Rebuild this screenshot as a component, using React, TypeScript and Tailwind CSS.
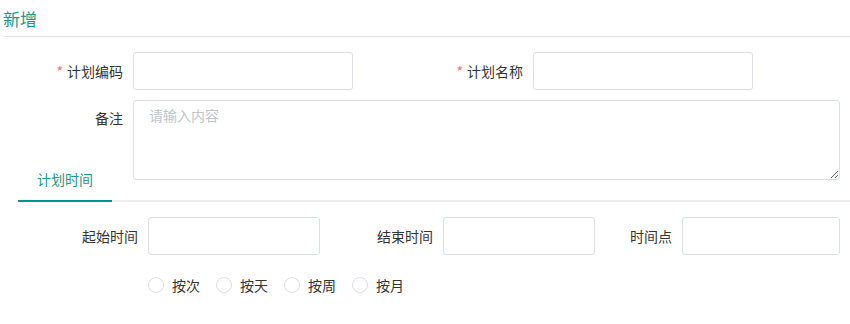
import React from 'react';

const teal = 'text-[#16998a]';

function Field({ label, required, labelW, inputW, className = '' }: { label: string; required?: boolean; labelW: string; inputW: string; className?: string }) {
  return (
    <div className={`flex items-center ${className}`}>
      <label className={`${labelW} pr-[10px] text-right text-sm text-[#333]`}>
        {required && <span className="mr-[4px] text-[#f56c6c]">*</span>}
        {label}
      </label>
      <input className={`${inputW} h-[38px] rounded-[3px] border border-[#dcdfe6] bg-white px-[15px] outline-none`} />
    </div>
  );
}

export default function App() {
  const radios = ['按次', '按天', '按周', '按月'];
  return (
    <div className="min-h-[324px] w-[850px] bg-white" style={{ fontFamily: '"Noto Sans CJK SC", "Noto Sans", sans-serif' }}>
      {/* 标题 */}
      <div className="ml-[3px] h-[37px] border-b border-[#e6e6e6] pt-[7px]">
        <h2 className={`text-[17px] leading-[24px] ${teal}`}>新增</h2>
      </div>

      {/* 基本信息 */}
      <div className="mt-[15px] flex">
        <Field label="计划编码" required labelW="w-[133px]" inputW="w-[220px]" className="w-[400px]" />
        <Field label="计划名称" required labelW="w-[133px]" inputW="w-[220px]" />
      </div>

      <div className="mt-[10px] flex">
        <label className="w-[133px] pr-[10px] pt-[8px] text-right text-sm text-[#333]">备注</label>
        <textarea
          placeholder="请输入内容"
          className="h-[80px] w-[707px] rounded-[3px] border border-[#dcdfe6] px-[15px] py-[2px] text-sm leading-[24px] outline-none placeholder:text-[#c0c4cc]"
        />
      </div>

      {/* 计划时间 tab */}
      <div className="relative mt-[-20px] ml-[18px] h-[42px] border-b-2 border-[#eeeeee]">
        <div className={`relative inline-flex h-[40px] items-center px-[19px] pb-[3px] text-sm ${teal}`}>
          计划时间
          <span className="absolute bottom-[-2px] left-0 h-[2px] w-full bg-[#009688]" />
        </div>
      </div>

      <div className="mt-[15px] flex">
        <Field label="起始时间" labelW="w-[148px]" inputW="w-[172px]" />
        <Field label="结束时间" labelW="w-[123px]" inputW="w-[152px]" />
        <Field label="时间点" labelW="w-[87px]" inputW="w-[158px]" className="-mt-[1px]" />
      </div>

      <div className="mt-[20px] flex pl-[148px]">
        {radios.map((r) => (
          <label key={r} className="mr-[16px] flex items-center text-sm text-[#333]">
            <span className="mr-[8px] h-[16px] w-[16px] rounded-full border border-[#dcdfe6] bg-white" />
            {r}
          </label>
        ))}
      </div>
    </div>
  );
}
